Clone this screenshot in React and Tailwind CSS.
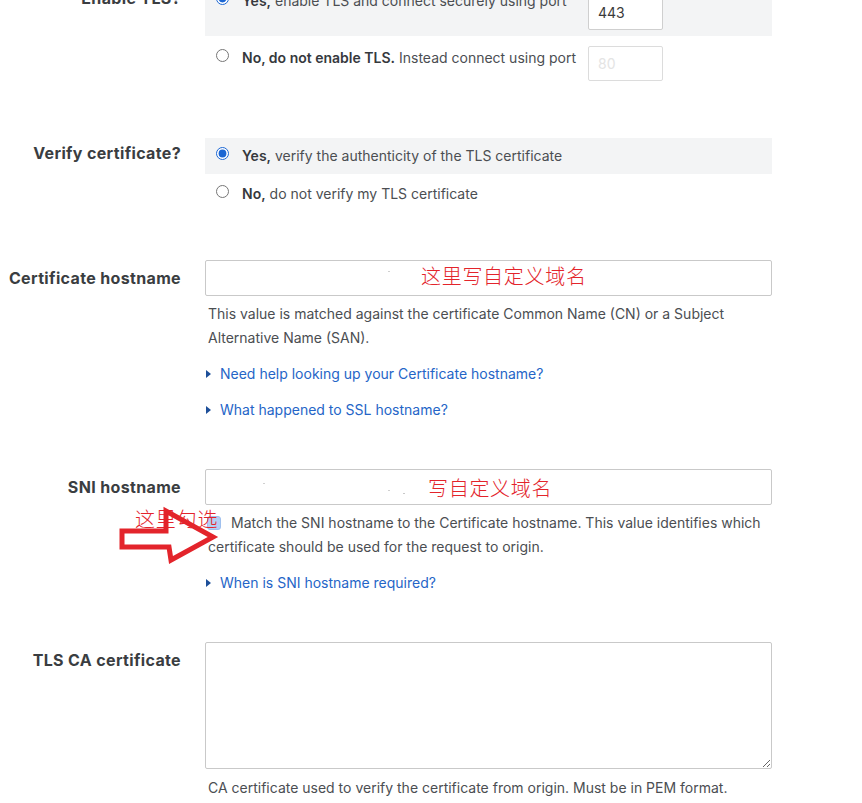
import React from "react";

function Label({ children, pt = "pt-[6px]" }) {
  return (
    <div className={`w-[181px] shrink-0 text-right text-[16px] leading-6 font-bold tracking-[0.35px] text-[#3a3d41] whitespace-nowrap ${pt}`}>
      {children}
    </div>
  );
}

function Radio({ checked }) {
  return (
    <input
      type="radio"
      readOnly
      checked={checked}
      className="m-0 mt-[3px] w-[13px] h-[13px] shrink-0 accent-[#1b66d3]"
    />
  );
}

function Tri() {
  return (
    <svg width="5" height="8" viewBox="0 0 5 8" className="shrink-0">
      <path d="M0 0 L5 4 L0 8 Z" fill="#1d4f99" />
    </svg>
  );
}

function HelpLink({ children, mt = "mt-3" }) {
  return (
    <div className={`flex items-center pl-[1px] ${mt} text-[14px] leading-6 text-[#2565c7] whitespace-nowrap`}>
      <Tri />
      <span className="ml-[9px]">{children}</span>
    </div>
  );
}

export default function App() {
  return (
    <div className="relative w-[862px] h-[803px] overflow-hidden bg-white font-['Inter',sans-serif] text-[#4b4e52]">
      <div className="-mt-[17px]">
        {/* Enable TLS */}
        <div className="flex gap-6">
          <Label pt="pt-[3px]">Enable TLS?</Label>
          <div className="w-[567px] flex flex-col gap-[4px] text-[14px]">
            <div className="flex items-start bg-[#f3f4f5] pl-[11px] pr-[109px] py-[6px]">
              <Radio checked />
              <div className="flex-1 ml-[13px] leading-6 whitespace-nowrap">
                <b className="font-semibold text-[#36393d]">Yes,</b> enable TLS and connect securely using port
              </div>
              <div className="mt-[6px] w-[75px] h-[35px] shrink-0 border border-[#cfcfcf] rounded-[2px] bg-white pl-[9px] flex items-center text-[14px] text-[#3a3a3a]">
                443
              </div>
            </div>
            <div className="flex items-start pl-[11px] pr-[109px] py-[6px]">
              <Radio />
              <div className="flex-1 ml-[13px] leading-6 whitespace-nowrap">
                <b className="font-semibold text-[#36393d]">No, do not enable TLS.</b> Instead connect using port
              </div>
              <div className="w-[75px] h-[35px] shrink-0 border border-[#dcdcdc] rounded-[2px] bg-white pl-[9px] flex items-center text-[14px] text-[#e4e4e4]">
                80
              </div>
            </div>
          </div>
        </div>

        {/* Verify certificate */}
        <div className="flex gap-6 mt-[51px]">
          <Label pt="pt-[3px]">Verify certificate?</Label>
          <div className="w-[567px] flex flex-col gap-[2px] text-[14px]">
            <div className="flex items-start bg-[#f3f4f5] pl-[11px] py-[6px]">
              <Radio checked />
              <div className="ml-[13px] leading-6 whitespace-nowrap">
                <b className="font-semibold text-[#36393d]">Yes,</b> verify the authenticity of the TLS certificate
              </div>
            </div>
            <div className="flex items-start pl-[11px] py-[6px]">
              <Radio />
              <div className="ml-[13px] leading-6 whitespace-nowrap">
                <b className="font-semibold text-[#36393d]">No,</b> do not verify my TLS certificate
              </div>
            </div>
          </div>
        </div>

        {/* Certificate hostname */}
        <div className="flex gap-6 mt-[48px]">
          <Label>Certificate hostname</Label>
          <div className="w-[567px] flex flex-col">
            <div className="relative h-[36px] border border-[#c9c9c9] rounded-[2px] bg-white">
              <span className="absolute left-[182px] top-[10px] w-[2px] h-[1px] bg-[#d0d0d0]" />
              <span className="absolute left-[215px] top-[3px] text-[20px] leading-[24px] tracking-[0.7px] text-[#e3242b] font-['Noto_Sans_CJK_SC',sans-serif] font-light whitespace-nowrap">
                这里写自定义域名
              </span>
            </div>
            <div className="mt-[6px] pl-[3px] text-[14px] leading-6 whitespace-nowrap">
              This value is matched against the certificate Common Name (CN) or a Subject
              <br />
              Alternative Name (SAN).
            </div>
            <HelpLink>Need help looking up your Certificate hostname?</HelpLink>
            <HelpLink>What happened to SSL hostname?</HelpLink>
          </div>
        </div>

        {/* SNI hostname */}
        <div className="flex gap-6 mt-[47px]">
          <Label>SNI hostname</Label>
          <div className="w-[567px] flex flex-col">
            <div className="relative h-[36px] border border-[#c9c9c9] rounded-[2px] bg-white">
              <span className="absolute left-[57px] top-[13px] w-[2px] h-[1px] bg-[#d0d0d0]" />
              <span className="absolute left-[182px] top-[20px] w-[2px] h-[1px] bg-[#d0d0d0]" />
              <span className="absolute left-[197px] top-[23px] w-[2px] h-[1px] bg-[#c8c8c8]" />
              <span className="absolute left-[222px] top-[6px] text-[20px] leading-[24px] tracking-[0.7px] text-[#e3242b] font-['Noto_Sans_CJK_SC',sans-serif] font-light whitespace-nowrap">
                写自定义域名
              </span>
            </div>
            <div className="mt-[6px] pl-[3px] text-[14px] leading-6 whitespace-nowrap">
              <span className="inline-block align-[-2px] -ml-[1px] mr-[10px] w-[14px] h-[14px] rounded-[3px] bg-[#b3d0f5] border border-[#9fc0ee]" />
              Match the SNI hostname to the Certificate hostname. This value identifies which
              <br />
              certificate should be used for the request to origin.
            </div>
            <HelpLink>When is SNI hostname required?</HelpLink>
          </div>
        </div>

        {/* TLS CA certificate */}
        <div className="flex gap-6 mt-[47px]">
          <Label>TLS CA certificate</Label>
          <div className="w-[567px] flex flex-col">
            <textarea
              readOnly
              className="block w-[567px] h-[127px] border border-[#c9c9c9] rounded-[2px] bg-white resize-y outline-none"
            />
            <div className="mt-[7px] pl-[3px] text-[14px] leading-6 whitespace-nowrap">
              CA certificate used to verify the certificate from origin. Must be in PEM format.
            </div>
          </div>
        </div>
      </div>

      {/* Annotations */}
      <span className="absolute left-[135px] top-[507px] text-[20px] leading-[24px] tracking-[0.8px] text-[#e3242b] font-['Noto_Sans_CJK_SC',sans-serif] font-light whitespace-nowrap">
        这里勾选
      </span>
      <svg className="absolute left-0 top-0 pointer-events-none" width="862" height="803">
        <path
          d="M122 531 L166 531 L166 511 L213 537 L171 560 L169 547 L122 547 Z"
          fill="none"
          stroke="#e3242b"
          strokeWidth="5"
          strokeLinejoin="miter"
        />
      </svg>
    </div>
  );
}
